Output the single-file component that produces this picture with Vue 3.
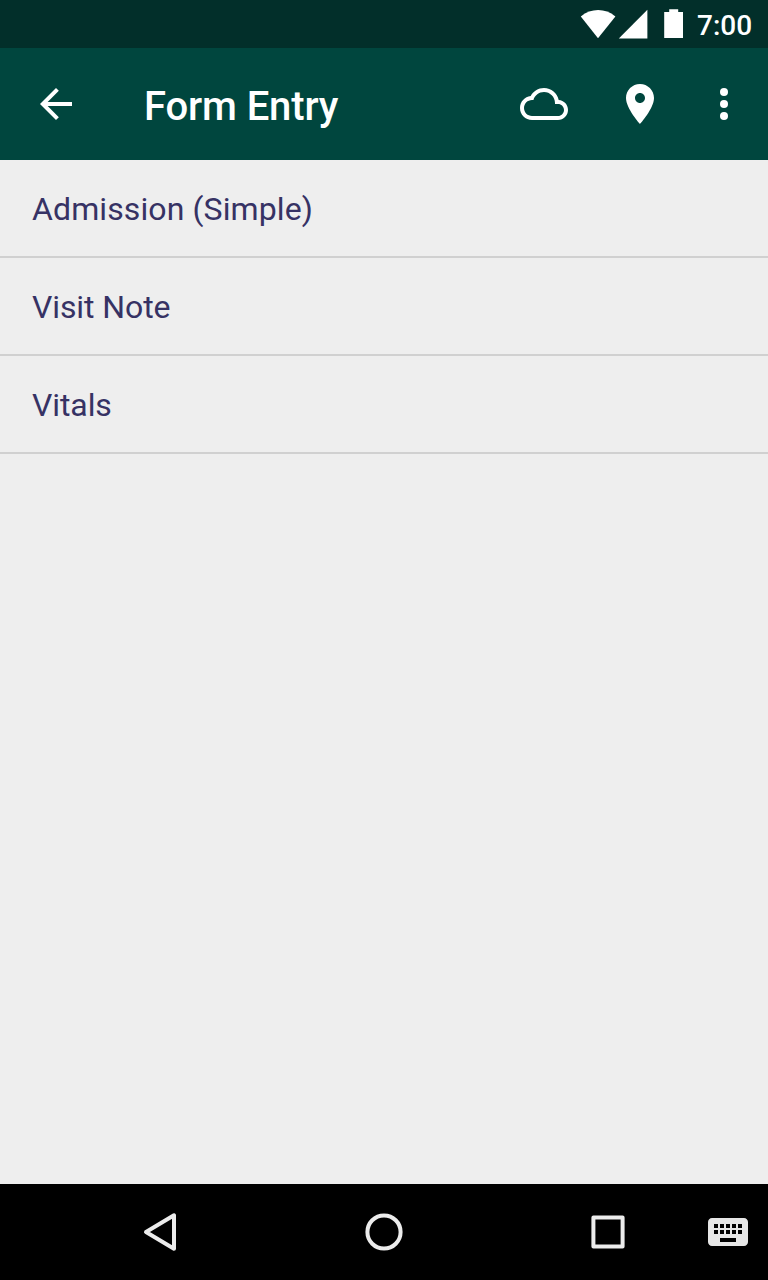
<script setup>
const forms = ['Admission (Simple)', 'Visit Note', 'Vitals']
</script>

<template>
  <div class="screen">
    <div class="status">
      <svg class="indicators" width="104" height="48" viewBox="580 0 104 48" fill="#fff">
        <path d="M598 38.300 580.800 16.400C591 8 605.200 8 615.400 16.400z" />
        <path d="M618.800 38.500H647.400V9.700z" />
        <path d="M664.200 12h5V9.300h9V12h4.800v26h-18.800z" />
      </svg>
      <span class="time">7:00</span>
    </div>
    <header class="bar">
      <svg class="icon" viewBox="0 0 24 24"><path d="M20 11H7.830l5.590-5.590L12 4l-8 8 8 8 1.410-1.410L7.830 13H20v-2z" /></svg>
      <h1 class="title">Form Entry</h1>
      <svg class="icon" viewBox="0 0 24 24"><path d="M19.350 10.040C18.670 6.590 15.640 4 12 4 9.110 4 6.600 5.640 5.350 8.040 2.340 8.360 0 10.910 0 14c0 3.310 2.690 6 6 6h13c2.760 0 5-2.240 5-5 0-2.640-2.050-4.780-4.650-4.960zM19 18H6c-2.210 0-4-1.790-4-4s1.790-4 4-4h.710C7.370 7.690 9.480 6 12 6c3.040 0 5.500 2.460 5.500 5.500v.5H19c1.660 0 3 1.340 3 3s-1.340 3-3 3z" /></svg>
      <svg class="icon place" viewBox="0 0 24 24"><path d="M12 2C8.130 2 5 5.130 5 9c0 5.250 7 13 7 13s7-7.750 7-13c0-3.870-3.130-7-7-7zm0 9.500c-1.380 0-2.500-1.120-2.500-2.500s1.120-2.500 2.500-2.500 2.500 1.120 2.500 2.500-1.120 2.500-2.500 2.500z" /></svg>
      <svg class="icon more" viewBox="0 0 24 24"><circle cx="12" cy="6" r="2" /><circle cx="12" cy="12" r="2" /><circle cx="12" cy="18" r="2" /></svg>
    </header>
    <main class="list">
      <div v-for="form in forms" :key="form" class="row">{{ form }}</div>
    </main>
    <nav class="nav">
      <svg class="key" viewBox="0 0 48 48"><path d="M34 7.300V40.700L6 24z" /></svg>
      <svg class="key" viewBox="0 0 48 48"><circle cx="24" cy="24" r="16.600" /></svg>
      <svg class="key" viewBox="0 0 48 48"><rect x="9.400" y="9.400" width="29.200" height="29.200" /></svg>
      <svg class="keyboard" viewBox="0 0 24 24"><path d="M20 5H4c-1.100 0-1.990.9-1.990 2L2 17c0 1.100.9 2 2 2h16c1.100 0 2-.9 2-2V7c0-1.100-.9-2-2-2zm-9 3h2v2h-2V8zm0 3h2v2h-2v-2zM8 8h2v2H8V8zm0 3h2v2H8v-2zm-1 2H5v-2h2v2zm0-3H5V8h2v2zm9 7H8v-2h8v2zm0-4h-2v-2h2v2zm0-3h-2V8h2v2zm3 3h-2v-2h2v2zm0-3h-2V8h2v2z" /></svg>
    </nav>
  </div>
</template>

<style>
body { margin: 0; }
</style>

<style scoped>
.screen {
  display: flex;
  flex-direction: column;
  width: 768px;
  height: 1280px;
  overflow: hidden;
  background: #eee;
  font-family: Roboto, sans-serif;
}
.status {
  display: flex;
  flex: none;
  justify-content: flex-end;
  height: 48px;
  padding-right: 16px;
  background: #022f2a;
  color: #fff;
}
.indicators { flex: none; margin-right: 13px; }
.time {
  width: 55px;
  font-size: 28px;
  font-weight: 500;
  line-height: 52px;
  white-space: nowrap;
}
.bar {
  display: flex;
  flex: none;
  align-items: center;
  height: 112px;
  padding: 0 20px 0 32px;
  box-sizing: border-box;
  background: #00463e;
}
.icon { flex: none; width: 48px; height: 48px; fill: #fff; }
.title {
  flex: 1;
  margin: 6px 0 0 64px;
  color: #fff;
  font-size: 40px;
  font-weight: 500;
  line-height: 48px;
  letter-spacing: -0.12px;
}
.place { margin-left: 48px; }
.more { margin-left: 36px; }
.list { flex: 1; }
.row {
  height: 96px;
  padding-left: 32px;
  border-bottom: 2px solid #d0d0d0;
  color: #363264;
  font-size: 32px;
  line-height: 98px;
  letter-spacing: -0.1px;
}
.row:first-child { letter-spacing: 0.11px; }
.nav {
  display: flex;
  flex: none;
  align-items: center;
  height: 96px;
  padding-left: 140px;
  background: #000;
}
.key {
  flex: none;
  width: 48px;
  height: 48px;
  margin-right: 176px;
  fill: none;
  stroke: #ececec;
  stroke-width: 4;
  stroke-linejoin: round;
}
.key:first-child { margin-right: 172px; }
.key:nth-child(3) { margin-right: 72px; }
.keyboard { flex: none; width: 48px; height: 48px; fill: #e6e6e6; }
</style>
